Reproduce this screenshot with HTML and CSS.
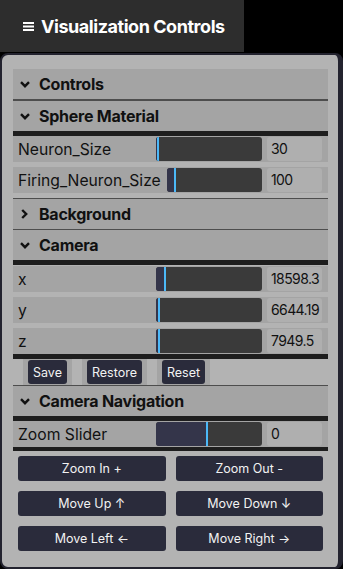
FILE: index.html
```html
<!DOCTYPE html>
<html lang="en">
<head>
  <meta charset="UTF-8">
  <meta name="viewport" content="width=device-width, initial-scale=1">
  <title>Visualization Controls</title>
  <link rel="stylesheet" href="styles.css">
</head>
<body>
  <div class="menu-tab">
    <svg class="burger" width="11" height="9" viewBox="0 0 11 9"><path d="M0 1h11M0 4.5h11M0 8h11" stroke="#fff" stroke-width="1.8"/></svg>
    <span>Visualization Controls</span>
  </div>

  <div class="panel">
    <div class="title root-title">
      <svg class="chev" width="10" height="7" viewBox="0 0 10 7"><path d="M1 1.2L5 5.2L9 1.2" fill="none" stroke="#111" stroke-width="2.4"/></svg>
      Controls
    </div>

    <!-- sphere material -->
    <div class="title">
      <svg class="chev" width="10" height="7" viewBox="0 0 10 7"><path d="M1 1.2L5 5.2L9 1.2" fill="none" stroke="#111" stroke-width="2.4"/></svg>
      Sphere Material
    </div>
    <div class="children pad-bottom">
      <div class="row">
        <span class="label">Neuron_Size</span>
        <div class="slider"><div class="fill" style="width:3%"></div></div>
        <div class="num">30</div>
      </div>
      <div class="row">
        <span class="label">Firing_Neuron_Size</span>
        <div class="slider"><div class="fill" style="width:10%"></div></div>
        <div class="num">100</div>
      </div>
    </div>

    <div class="title">
      <svg class="chev" width="10" height="10" viewBox="0 0 10 10"><path d="M2.2 1L6.2 5L2.2 9" fill="none" stroke="#111" stroke-width="2.4"/></svg>
      Background
    </div>

    <!-- camera -->
    <div class="title">
      <svg class="chev" width="10" height="7" viewBox="0 0 10 7"><path d="M1 1.2L5 5.2L9 1.2" fill="none" stroke="#111" stroke-width="2.4"/></svg>
      Camera
    </div>
    <div class="children pad-top">
      <div class="row">
        <span class="label">x</span>
        <div class="slider"><div class="fill" style="width:9%"></div></div>
        <div class="num">18598.3</div>
      </div>
      <div class="row">
        <span class="label">y</span>
        <div class="slider"><div class="fill" style="width:4%"></div></div>
        <div class="num">6644.19</div>
      </div>
      <div class="row">
        <span class="label">z</span>
        <div class="slider"><div class="fill" style="width:4%"></div></div>
        <div class="num">7949.5</div>
      </div>
      <div class="bar"></div>
      <div class="btn-row">
        <div class="btn-cell"><button>Save</button></div>
        <div class="btn-cell"><button>Restore</button></div>
        <div class="btn-cell"><button>Reset</button></div>
      </div>
    </div>

    <!-- camera navigation -->
    <div class="title">
      <svg class="chev" width="10" height="7" viewBox="0 0 10 7"><path d="M1 1.2L5 5.2L9 1.2" fill="none" stroke="#111" stroke-width="2.4"/></svg>
      Camera Navigation
    </div>
    <div class="children">
      <div class="row">
        <span class="label">Zoom Slider</span>
        <div class="slider"><div class="fill" style="width:49%"></div></div>
        <div class="num">0</div>
      </div>
      <div class="bar thin"></div>
      <div class="nav-grid">
        <button>Zoom In +</button>
        <button>Zoom Out -</button>
        <button>Move Up ↑</button>
        <button>Move Down ↓</button>
        <button>Move Left ←</button>
        <button>Move Right →</button>
      </div>
    </div>
  </div>
</body>
</html>
```

FILE: styles.css
```css
:root {
  --page: #000;
  --tab: #2d2d2d;
  --panel: #b3b3b3;
  --row: #a4a4a4;
  --line: #4d4d4d;
  --dark: #1e1e1e;
  --track: #3a3a3a;
  --fill: #34354a;
  --thumb: #4cb8f8;
  --btn: #2a2b3b;
  --text: #111;
}
* { box-sizing: border-box; margin: 0; padding: 0; }
body {
  background: var(--page);
  font-family: Inter, 'Noto Sans', sans-serif;
  color: var(--text);
}
.menu-tab {
  width: 244px;
  height: 52px;
  background: var(--tab);
  color: #fff;
  font-size: 18px;
  font-weight: 700;
  letter-spacing: -0.45px;
  display: flex;
  align-items: center;
  gap: 7px;
  padding-left: 23px;
}
.burger { margin-top: 1px; }
.panel {
  margin-top: 1px;
  height: 516px;
  background: var(--panel);
  border: 2px solid #23232f;
  border-right-width: 5px;
  border-radius: 8px;
  padding: 14px 10px 0 11px;
}
.title {
  height: 31px;
  background: var(--row);
  border-top: 1px solid var(--line);
  display: flex;
  align-items: center;
  gap: 9px;
  padding-left: 7px;
  font-size: 16px;
  font-weight: 700;
  letter-spacing: -0.25px;
}
.title.root-title {
  border-top: none;
  border-bottom: 1px solid var(--line);
}
.chev { flex: none; }
.children {
  border-top: 5px solid var(--dark);
}
.children.pad-bottom { padding-bottom: 5px; }
.children.pad-top { padding-top: 1px; }
.row {
  height: 26px;
  background: var(--row);
  display: flex;
  align-items: center;
  padding: 0 6px 0 5px;
  font-size: 15.7px;
}
.row + .row { margin-top: 5px; }
.label {
  min-width: 138px;
  padding-right: 6px;
  white-space: nowrap;
}
.slider {
  flex: 1;
  height: 24px;
  background: var(--track);
  border-radius: 3px;
  margin-right: 5px;
  overflow: hidden;
}
.fill {
  height: 100%;
  background: var(--fill);
  border-right: 2px solid var(--thumb);
}
.num {
  width: 55px;
  height: 24px;
  background: #afafaf;
  border-radius: 3px;
  padding-left: 4px;
  font-size: 14px;
  letter-spacing: -0.6px;
  line-height: 24px;
  white-space: nowrap;
  overflow: hidden;
}
.bar {
  height: 5px;
  background: var(--dark);
}
.bar.thin { height: 4px; }
.btn-row {
  display: flex;
  gap: 10px;
  padding-left: 10px;
  height: 26px;
}
.btn-cell {
  background: var(--row);
  padding: 1px 5px;
}
button {
  font-family: Inter, 'Noto Sans', sans-serif;
  font-size: 12.5px;
  color: #f2f2f2;
  background: var(--btn);
  border: none;
  border-radius: 3px;
  cursor: pointer;
}
.btn-cell button {
  height: 24px;
  padding: 0 5px;
}
.nav-grid {
  display: grid;
  grid-template-columns: 1fr 1fr;
  gap: 10px;
  padding: 5px 5px 0;
}
.nav-grid button { height: 25px; }
```
